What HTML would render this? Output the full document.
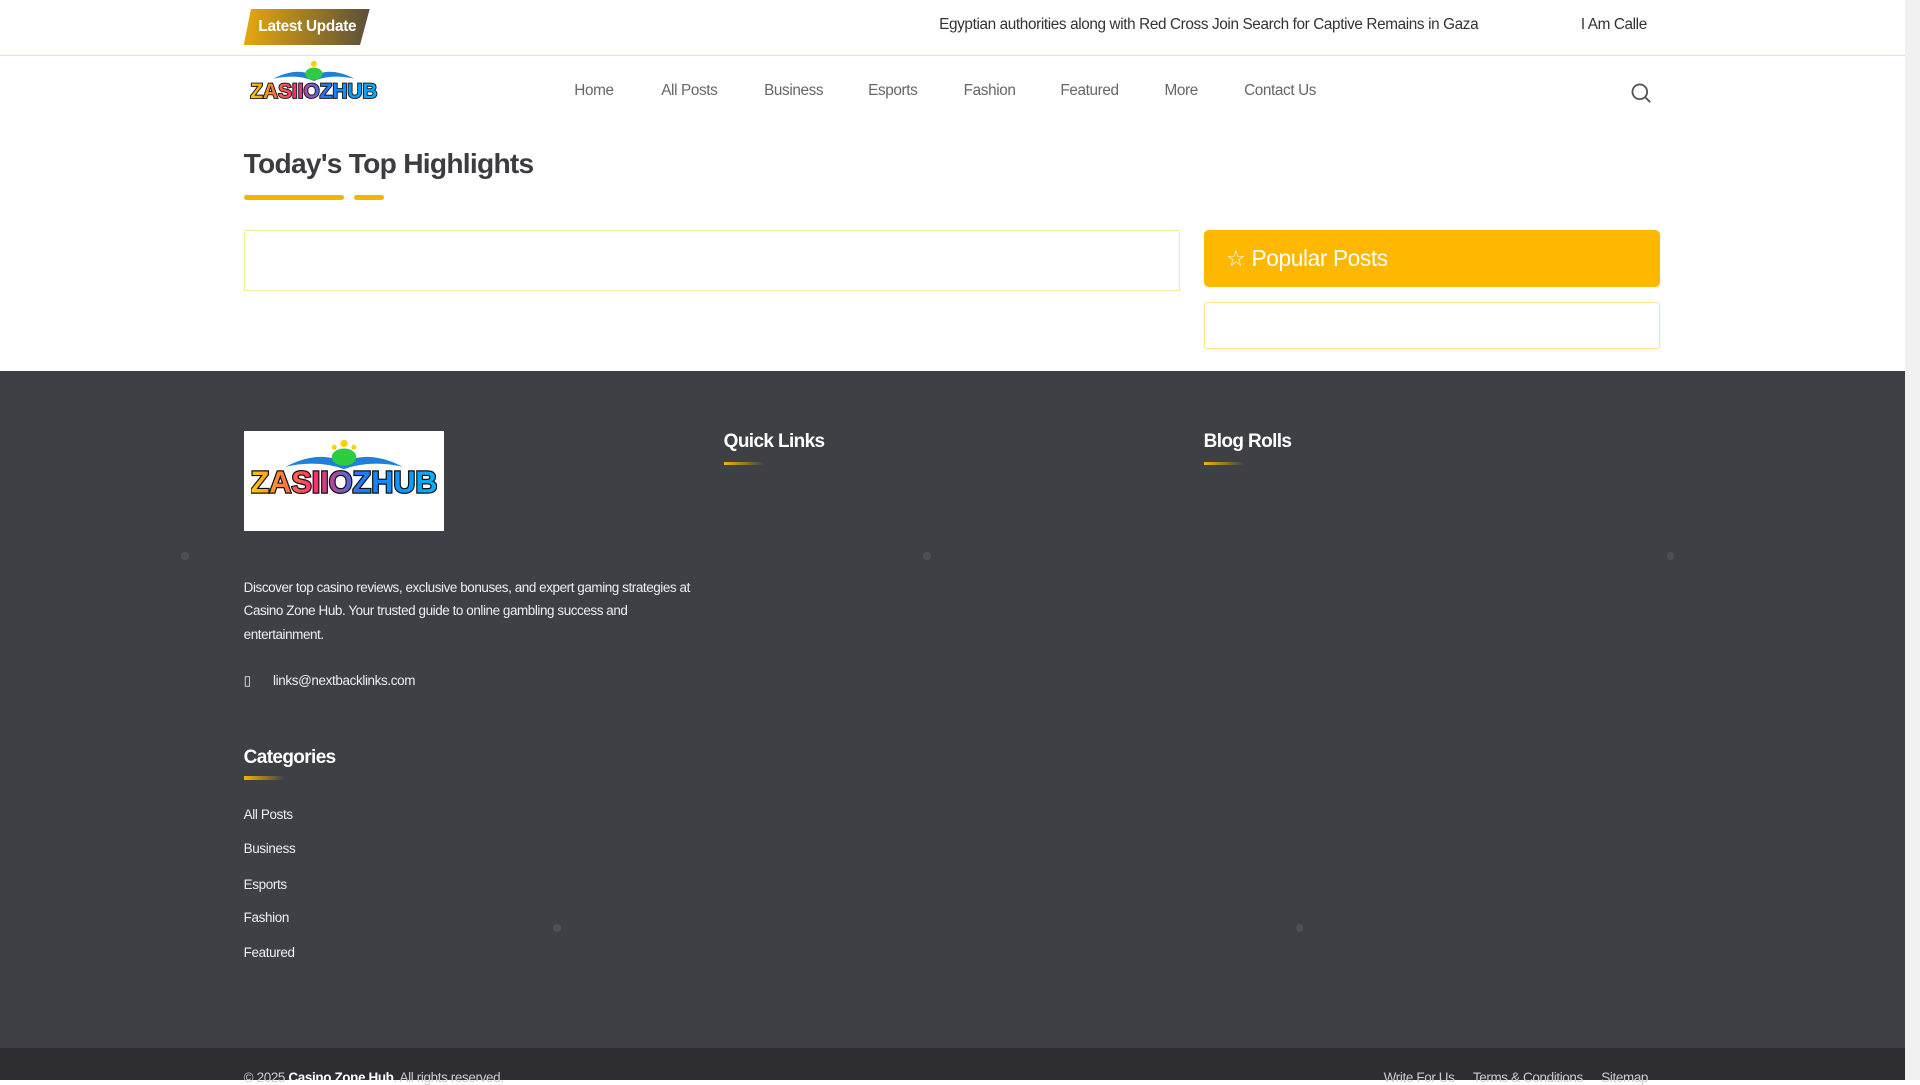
<!DOCTYPE html>
<html><head><meta charset="utf-8">
<style>
html{zoom:1.22449;}
body{margin:0;width:1568px;height:882px;overflow:hidden;font-family:"Liberation Sans",sans-serif;background:#fff;position:relative;}
.abs{position:absolute;}
.sb{position:absolute;right:0;top:0;width:12px;height:882px;background:#f1f1f1;}
.top{position:absolute;left:0;top:0;width:1556px;height:45px;border-bottom:1px solid #f3e7a6;}
.lu{position:absolute;left:199px;top:7px;width:103px;height:30px;background:linear-gradient(90deg,#e5a80e,#5a4f3a);clip-path:polygon(6px 0,100% 0,calc(100% - 8px) 100%,0 100%);color:#fff;font-size:12.5px;font-weight:bold;line-height:30px;padding-left:12px;box-sizing:border-box;letter-spacing:-.2px;}
.tick{position:absolute;top:13px;font-size:12.5px;color:#333;white-space:nowrap;letter-spacing:-.3px;}
.nav a{position:absolute;top:67px;font-size:12.5px;color:#666;text-decoration:none;letter-spacing:-.3px;}
.h1{position:absolute;left:199px;top:121px;font-size:23px;font-weight:bold;color:#3b3b40;letter-spacing:-.6px;}
.ul1{position:absolute;left:199px;top:159px;width:82px;height:4px;background:#f5b400;border-radius:2px;}
.ul2{position:absolute;left:289px;top:159px;width:25px;height:4px;background:#f5b400;border-radius:2px;}
.box1{position:absolute;left:199px;top:188px;width:765px;height:50px;border:1px solid #f6ea9e;box-sizing:border-box;}
.pp{position:absolute;left:983px;top:188px;width:373px;height:46px;background:#ffb800;border-radius:4px;color:#fff;font-size:18.5px;line-height:46px;padding-left:18px;box-sizing:border-box;letter-spacing:-.3px;}
.box2{position:absolute;left:983px;top:247px;width:373px;height:38px;border:1px solid #f8e98e;border-radius:3px;box-sizing:border-box;box-shadow:0 1px 2px rgba(0,0,0,.06);}
.foot{position:absolute;left:0;top:303px;width:1556px;height:553px;background:#3f4046;}
.bot{position:absolute;left:0;top:856px;width:1556px;height:26px;background:#2d2d32;}
.ft{position:absolute;color:#fff;font-size:15.5px;font-weight:bold;letter-spacing:-.5px;}
.fu{position:absolute;height:3px;width:33px;background:linear-gradient(90deg,#f5b400,#3f4046);}
.fl{position:absolute;left:199px;color:#eee;font-size:11px;letter-spacing:-.3px;}
.dot{position:absolute;width:6px;height:6px;border-radius:50%;background:#4e4f55;}
</style></head><body>
<div class="top">
<div class="lu">Latest Update</div>
<div class="tick" style="left:767px">Egyptian authorities along with Red Cross Join Search for Captive Remains in Gaza</div>
<div class="tick" style="left:1291px">I Am Calle</div>
</div>
<svg class="abs" style="left:203px;top:48px" width="106" height="38" viewBox="0 0 106 38">
<defs><linearGradient id="g" x1="0" x2="1"><stop offset="0" stop-color="#ffcc00"/><stop offset=".35" stop-color="#ff2d6f"/><stop offset=".6" stop-color="#1a7bff"/><stop offset="1" stop-color="#00b4ff"/></linearGradient></defs>
<path d="M20 16 Q40 6 53 14 Q66 6 86 16 Q66 12 53 18 Q40 12 20 16Z" fill="#1f7fd9"/>
<ellipse cx="53" cy="12" rx="7" ry="5" fill="#2ecc40"/>
<circle cx="53" cy="4" r="2.5" fill="#ffd000"/>
<text x="53" y="32" text-anchor="middle" font-family="Liberation Sans" font-weight="bold" font-size="17" fill="url(#g)" stroke="#111" stroke-width="1.5" paint-order="stroke">ZASIIOZHUB</text>
</svg>
<div class="nav">
<a style="left:469px">Home</a><a style="left:540px">All Posts</a><a style="left:624px">Business</a><a style="left:709px">Esports</a><a style="left:787px">Fashion</a><a style="left:866px">Featured</a><a style="left:951px">More</a><a style="left:1016px">Contact Us</a>
</div>
<svg class="abs" style="left:1331px;top:67px" width="18" height="18" viewBox="0 0 18 18"><circle cx="8" cy="8" r="6" fill="none" stroke="#555" stroke-width="1.5"/><path d="M12.5 12.5L16.5 16.5" stroke="#555" stroke-width="1.5"/></svg>
<div class="h1">Today's Top Highlights</div>
<div class="ul1"></div><div class="ul2"></div>
<div class="box1"></div>
<div class="pp">☆ Popular Posts</div>
<div class="box2"></div>
<div class="foot"></div>
<div class="dot" style="left:148px;top:451px"></div>
<div class="dot" style="left:754px;top:451px"></div>
<div class="dot" style="left:1361px;top:451px"></div>
<div class="dot" style="left:452px;top:755px"></div>
<div class="dot" style="left:1058px;top:755px"></div>
<div class="abs" style="left:199px;top:352px;width:164px;height:82px;background:#fff;"></div>
<svg class="abs" style="left:205px;top:355px" width="152" height="76" viewBox="0 0 152 76">
<path d="M28 26 Q55 12 76 22 Q97 12 124 26 Q97 20 76 28 Q55 20 28 26Z" fill="#1f7fd9"/>
<ellipse cx="76" cy="18" rx="10" ry="7" fill="#2ecc40"/>
<circle cx="76" cy="7" r="3" fill="#ffd000"/><circle cx="68" cy="10" r="2" fill="#ffd000"/><circle cx="84" cy="10" r="2" fill="#ffd000"/>
<text x="76" y="47" text-anchor="middle" font-family="Liberation Sans" font-weight="bold" font-size="25" fill="url(#g)" stroke="#111" stroke-width="2" paint-order="stroke">ZASIIOZHUB</text>
</svg>
<div class="ft" style="left:591px;top:352px">Quick Links</div><div class="fu" style="left:591px;top:377px"></div>
<div class="ft" style="left:983px;top:352px">Blog Rolls</div><div class="fu" style="left:983px;top:377px"></div>
<div class="abs" style="left:199px;top:470px;width:375px;color:#eee;font-size:11px;line-height:19.5px;letter-spacing:-.35px;">Discover top casino reviews, exclusive bonuses, and expert gaming strategies at Casino Zone Hub. Your trusted guide to online gambling success and entertainment.</div>
<div class="fl" style="top:550px">▯</div>
<div class="fl" style="left:223px;top:550px">links@nextbacklinks.com</div>
<div class="ft" style="left:199px;top:610px">Categories</div><div class="fu" style="left:199px;top:634px"></div>
<div class="fl" style="top:659px">All Posts</div>
<div class="fl" style="top:687px">Business</div>
<div class="fl" style="top:716px">Esports</div>
<div class="fl" style="top:743px">Fashion</div>
<div class="fl" style="top:772px">Featured</div>
<div class="bot"></div>
<div class="abs" style="left:199px;top:874px;color:#ccc;font-size:11px;letter-spacing:-.3px;">© 2025 <b style="color:#fff">Casino Zone Hub</b>. All rights reserved.</div>
<div class="abs" style="left:1130px;top:874px;color:#ccc;font-size:11px;letter-spacing:-.3px;white-space:nowrap;">Write For Us<span style="margin-left:15px">Terms &amp; Conditions</span><span style="margin-left:15px">Sitemap</span></div>
<div class="sb"></div>
</body></html>
